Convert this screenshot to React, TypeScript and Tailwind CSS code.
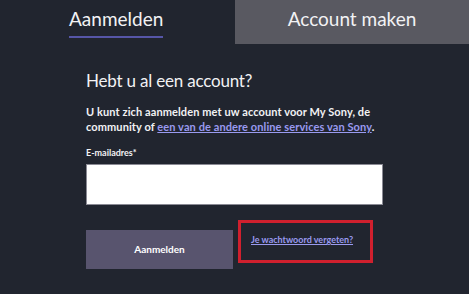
export default function App() {
  return (
    <div className="w-[469px] h-[294px] overflow-hidden bg-[#21252f] text-white font-['Lato',sans-serif]">
      {/* Tabs */}
      <div className="flex h-[44px]">
        <div className="w-[235px] pl-[69px] pt-[6px]">
          <div className="inline-block">
            <p className="text-[19px] leading-[26px] text-[#f2f2f4]">Aanmelden</p>
            <div className="mt-[4px] h-[2px] bg-[#5656a8]" />
          </div>
        </div>
        <div className="flex-1 bg-[#595961] flex justify-center pt-[6px]">
          <p className="text-[19px] leading-[26px] text-[#f2f2f4]">Account maken</p>
        </div>
      </div>

      {/* Form */}
      <div className="pl-[86px] w-[383px] pt-[25px]">
        <h2 className="text-[17px] leading-[24px] tracking-[-0.2px] text-[#f2f2f4]">Hebt u al een account?</h2>
        <p className="mt-[11px] text-[11px] leading-[15px] tracking-[0.1px] font-bold text-[#f2f2f4]">
          U kunt zich aanmelden met uw account voor My Sony, de community of{' '}
          <a href="#" className="underline text-[#9a9af0]">een van de andere online services van Sony</a>.
        </p>
        <label className="block mt-[13px] text-[9px] leading-[12px] font-bold text-[#f2f2f4]">E-mailadres*</label>
        <input className="block mt-[5px] w-[297px] h-[41px] bg-white border border-[#8a8a94]" />
        <div className="flex items-start mt-[15px] gap-[5px]">
          <button className="mt-[10px] w-[147px] h-[39px] bg-[#58546e] text-[10px] font-bold text-white">
            Aanmelden
          </button>
          <div className="w-[135px] h-[43px] border-[3px] border-[#d0202e] pl-[10px] pt-[11px]">
            <a href="#" className="block text-[9px] leading-[12px] font-bold underline text-[#9a9af0]">
              Je wachtwoord vergeten?
            </a>
          </div>
        </div>
      </div>
    </div>
  )
}
